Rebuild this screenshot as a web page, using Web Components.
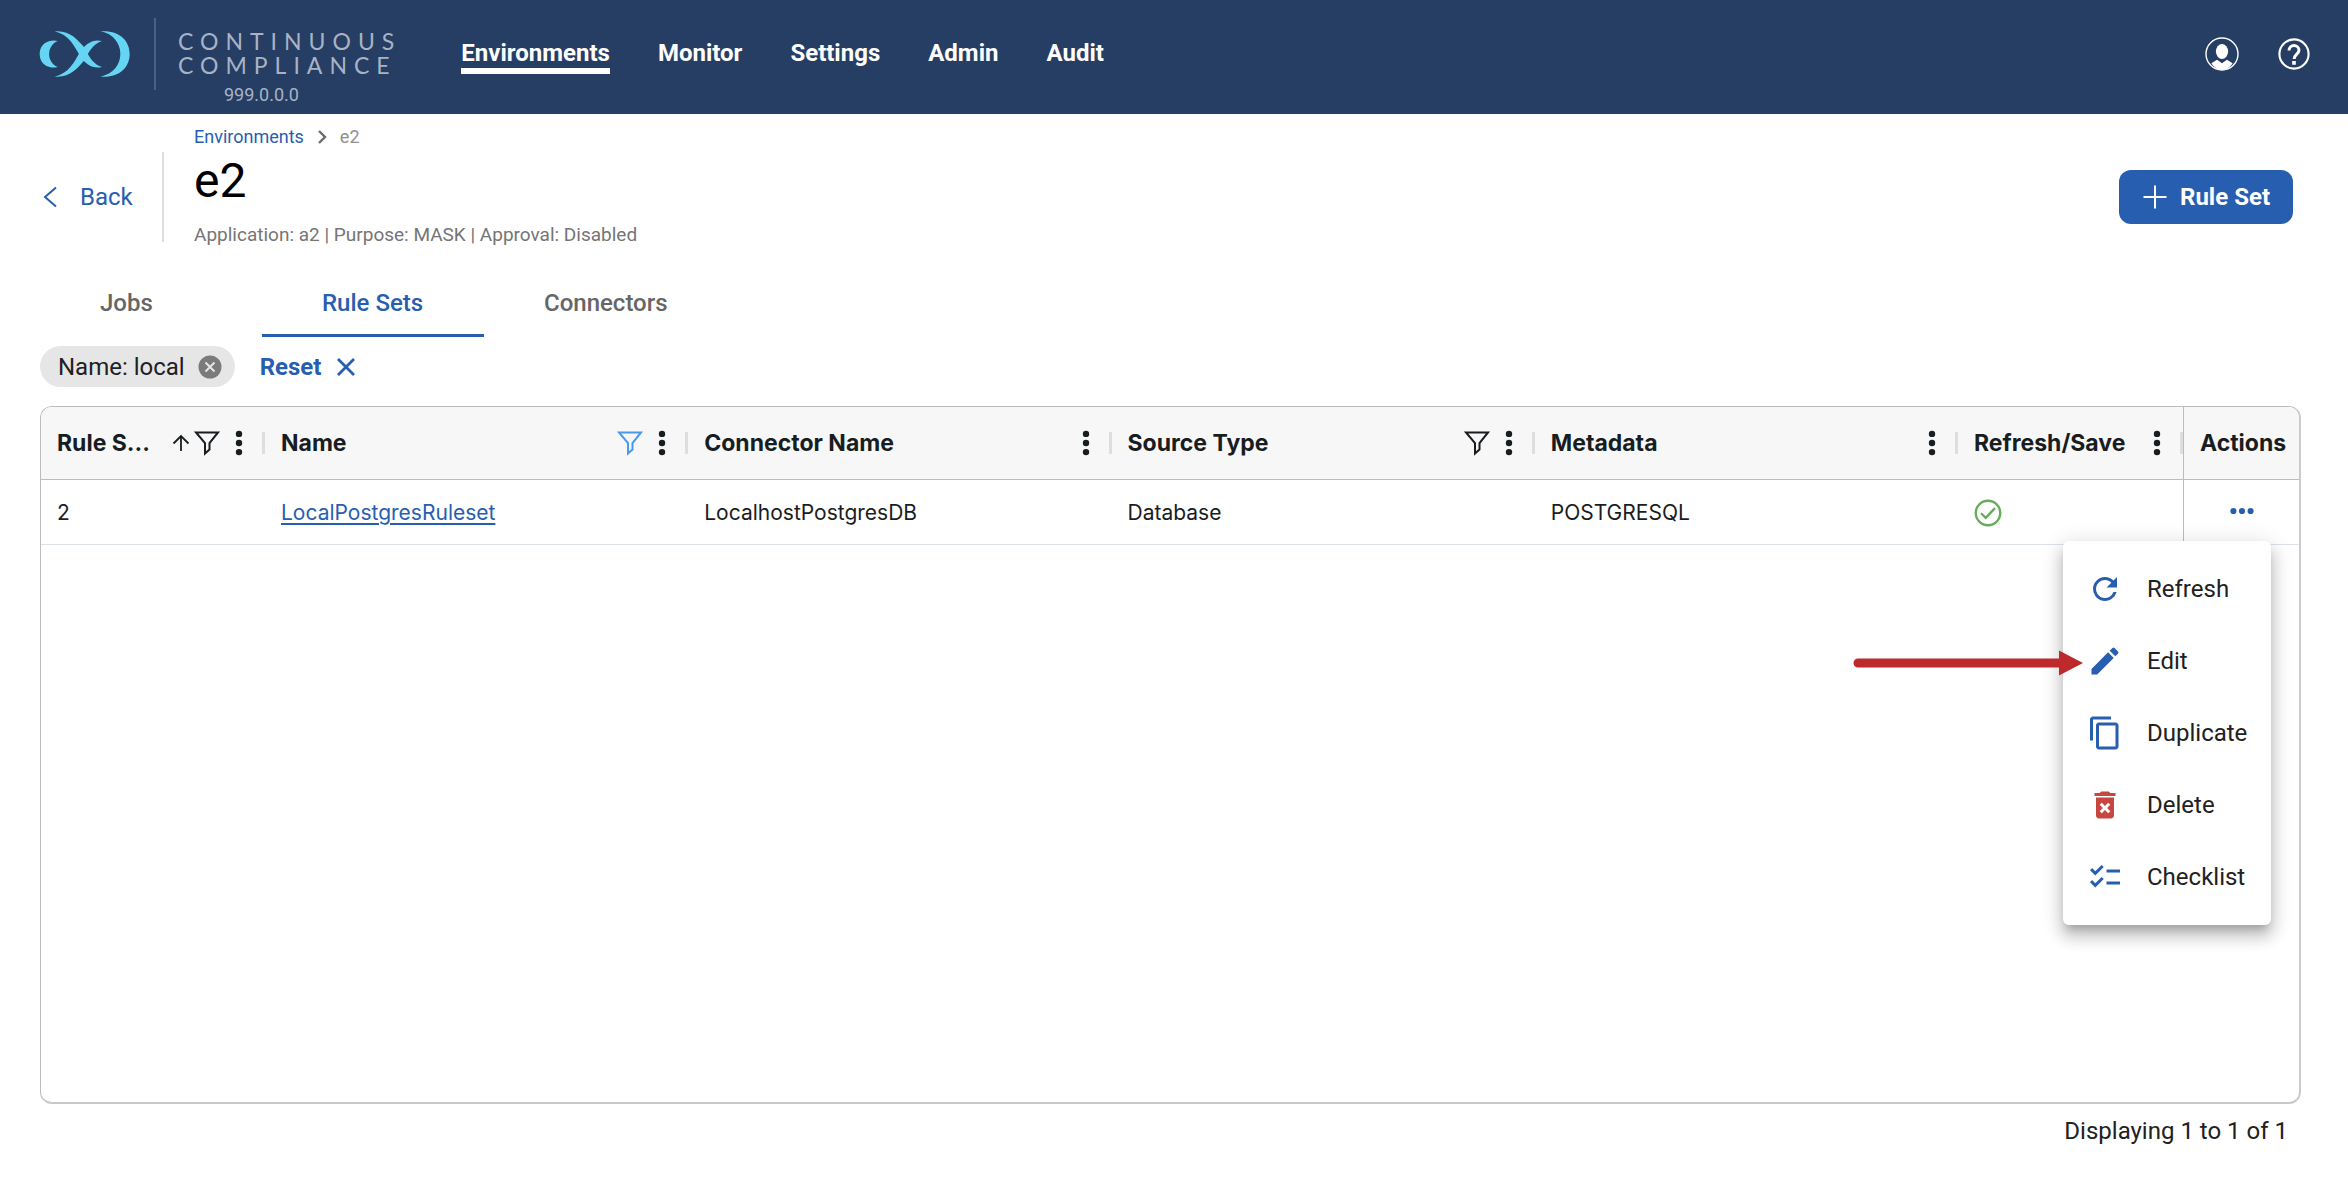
<!DOCTYPE html>
<html lang="en">
<head>
<meta charset="utf-8">
<title>Rule Sets</title>
<style>
  body {
    margin: 0;
    background: #fff;
    color: #212121;
    font-family: Roboto, sans-serif;
    font-size: 24px;
    line-height: 28px;
  }
</style>
</head>
<body>
<app-page>
  <top-bar slot="bar" version="999.0.0.0"></top-bar>
  <page-title name="e2">Application: a2 | Purpose: MASK | Approval: Disabled</page-title>
  <tab-strip></tab-strip>
  <filter-bar>Name: local</filter-bar>
  <ruleset-grid></ruleset-grid>
  <span slot="footer">Displaying 1 to 1 of 1</span>
</app-page>

<script>
const ICONS = {
  refresh: '<path d="M17.65 6.35A7.96 7.96 0 0 0 12 4a8 8 0 1 0 7.73 10h-2.08A6 6 0 1 1 12 6c1.66 0 3.14.69 4.22 1.78L13 11h7V4z"/>',
  edit: '<path d="M3 17.25V21h3.75L17.81 9.94l-3.75-3.75zM20.71 7.04a1 1 0 0 0 0-1.41l-2.34-2.34a1 1 0 0 0-1.41 0l-1.83 1.83 3.75 3.75z"/>',
  copy: '<path d="M16 1H4c-1.1 0-2 .9-2 2v14h2V3h12zm3 4H8c-1.1 0-2 .9-2 2v14c0 1.1.9 2 2 2h11c1.1 0 2-.9 2-2V7c0-1.1-.9-2-2-2m0 16H8V7h11z"/>',
  trash: '<path d="M6 19c0 1.1.9 2 2 2h8c1.1 0 2-.9 2-2V7H6zm2.46-7.12 1.41-1.41L12 12.59l2.12-2.12 1.41 1.41L13.41 14l2.12 2.12-1.41 1.41L12 15.41l-2.12 2.12-1.41-1.41L10.59 14zM15.5 4l-1-1h-5l-1 1H5v2h14V4z"/>',
  checklist: '<path d="M22 7h-9v2h9zm0 8h-9v2h9zM5.54 11 2 7.46l1.41-1.41 2.12 2.12 4.24-4.24 1.41 1.41zm0 8L2 15.46l1.41-1.41 2.12 2.12 4.24-4.24 1.41 1.41z"/>',
  cross: '<path d="M4 4 20 20M20 4 4 20" fill="none" stroke="currentColor" stroke-width="2.8"/>',
  clear: '<circle cx="12" cy="12" r="11.5"/><path d="M7.5 7.5l9 9M16.5 7.5l-9 9" stroke="#e6e6e6" stroke-width="2"/>',
  plus: '<path d="M12 .5v23M.5 12h23" fill="none" stroke="currentColor" stroke-width="2"/>',
  left: '<path d="M16 2.5 5 12l11 9.5" fill="none" stroke="currentColor" stroke-width="2"/>',
  right: '<path d="M9 6l6 6-6 6" fill="none" stroke="currentColor" stroke-width="2.4"/>',
  sort: '<path d="M12 20V5M4.5 12.5 12 5l7.5 7.5" fill="none" stroke="currentColor" stroke-width="1.8"/>',
  funnel: '<path d="M1 1.5h22L14.5 12v6.5L10 22.5V12z" fill="none" stroke="currentColor" stroke-width="2"/>',
  kebab: '<circle cx="12" cy="2.9" r="3.2"/><circle cx="12" cy="12" r="3.2"/><circle cx="12" cy="21.1" r="3.2"/>',
  more: '<circle cx="3.4" cy="12" r="3.1"/><circle cx="12" cy="12" r="3.1"/><circle cx="20.6" cy="12" r="3.1"/>',
  ok: '<circle cx="12" cy="12" r="10.5" fill="none" stroke="currentColor" stroke-width="2"/><path d="M6 12.2l4 4 8-8.4" fill="none" stroke="currentColor" stroke-width="2"/>',
  user: '<circle cx="12" cy="12" r="11.3" fill="none" stroke="currentColor" stroke-width="1"/><ellipse cx="12" cy="10.2" rx="4.3" ry="5.3"/><path d="M4.5 18.6 8.5 16.1 12 18.6l3.5-2.5 4 2.5c-1.8 2.900-4.500 4.700-7.500 4.700s-5.700-1.800-7.500-4.700z"/>',
  help: '<circle cx="12" cy="12" r="10.3" fill="none" stroke="currentColor" stroke-width="1.5"/><path d="M8.5 9.6c0-4.8 7-4.5 7-.3 0 2.7-3.4 2.9-3.4 6.2" fill="none" stroke="currentColor" stroke-width="2.1"/><path d="M10.7 17h2.6v2.5h-2.6z"/>'
};

function shadow(el, html) {
  const root = el.attachShadow({ mode: 'open' });
  root.innerHTML = html;
  return root;
}

class UiIcon extends HTMLElement {
  connectedCallback() {
    if (this.shadowRoot) return;
    const size = this.getAttribute('size') || 24;
    shadow(this, `
      <style>
        :host { display: inline-flex; flex: none; }
        svg { display: block; overflow: visible; fill: currentColor; }
      </style>
      <svg width="${size}" height="${size}" viewBox="0 0 24 24" aria-hidden="true">${ICONS[this.getAttribute('name')]}</svg>`);
  }
}
customElements.define('ui-icon', UiIcon);

class AppPage extends HTMLElement {
  constructor() {
    super();
    shadow(this, `
      <style>
        :host { display: flex; flex-direction: column; min-height: 100vh; }
        main { flex: 1; display: flex; flex-direction: column; padding: 11px 47px 0 40px; }
        footer { padding: 13px 60px 37px; text-align: right; }
      </style>
      <slot name="bar"></slot>
      <main><slot></slot></main>
      <footer><slot name="footer"></slot></footer>`);
  }
}
customElements.define('app-page', AppPage);

class TopBar extends HTMLElement {
  constructor() {
    super();
    const links = ['Environments', 'Monitor', 'Settings', 'Admin', 'Audit'];
    shadow(this, `
      <style>
        :host { display: block; background: #263e64; color: #fff; }
        header { display: flex; align-items: center; height: 108px; padding: 0 37px 6px 39px; }
        .rule { width: 2px; height: 72px; margin: 0 22px 0 23px; background: #4c6080; }
        .brand { padding-top: 28px; color: #a9b3c3; }
        .word { font: 400 23px/24px Lato, sans-serif; letter-spacing: 7px; }
        .version { margin-top: 6px; padding-left: 46px; font-size: 18px; line-height: 24px; }
        nav { display: flex; gap: 48px; margin-left: 60px; padding-top: 4px; flex: 1; }
        nav a { color: inherit; font-weight: 700; line-height: 30px; text-decoration: none; border-bottom: 6px solid transparent; }
        nav a[aria-current] { border-color: #fff; }
        button { display: flex; padding: 0; border: 0; background: none; color: inherit; }
        .tools { display: flex; gap: 38px; }
      </style>
      <header>
        <svg width="92" height="48" viewBox="28 60 276 144" fill="#65d5f3" role="img" aria-label="Logo">
          <path d="M84 93C66 87 30 95 30 132s36 45 54 39C50 156 50 108 84 93z"/>
          <path d="M75 64c45-4 67 23 92 52 12 28 28 49 50 55-27 7-51-9-66-33C132 105 118 75 75 64z"/>
          <path d="M75 200c45 4 67-23 92-52 12-28 28-49 50-55-27-7-51 9-66 33-19 33-33 63-76 74z"/>
          <path d="M212 64c58-4 88 28 88 68s-30 72-88 68c80-14 80-122 0-136z"/>
        </svg>
        <div class="rule"></div>
        <div class="brand">
          <div class="word">CONTINUOUS<br>COMPLIANCE</div>
          <div class="version"></div>
        </div>
        <nav>${links.map((l, i) => `<a href="#${l}"${i ? '' : ' aria-current="page"'}>${l}</a>`).join('')}</nav>
        <div class="tools">
          <button aria-label="Account"><ui-icon name="user" size="34"></ui-icon></button>
          <button aria-label="Help"><ui-icon name="help" size="34"></ui-icon></button>
        </div>
      </header>`);
  }

  connectedCallback() {
    this.shadowRoot.querySelector('.version').textContent = this.getAttribute('version');
  }
}
customElements.define('top-bar', TopBar);

class PageTitle extends HTMLElement {
  constructor() {
    super();
    shadow(this, `
      <style>
        :host { display: flex; align-items: center; height: 143px; }
        a { color: #275eb0; text-decoration: none; }
        .back { display: flex; align-items: center; gap: 16px; width: 122px; }
        .rule { width: 2px; height: 90px; background: #dedede; }
        .text { align-self: flex-start; flex: 1; padding-left: 30px; }
        .crumbs { display: flex; align-items: center; gap: 6px; font-size: 18px; line-height: 24px; color: #8e8e8e; }
        .crumbs ui-icon { color: #6b6b6b; }
        h1 { margin: 4px 0 14px; font-size: 48px; font-weight: 400; line-height: 56px; color: #000; }
        p { margin: 0; font-size: 19px; line-height: 24px; color: #757575; }
        button { display: flex; align-items: center; gap: 13px; height: 54px; padding: 0 23px 0 24px; margin-right: 8px;
          border: 0; border-radius: 12px; background: #275eb0; color: #fff; font: 700 24px/28px Roboto, sans-serif; }
      </style>
      <a class="back" href="#back"><ui-icon name="left" size="24"></ui-icon>Back</a>
      <div class="rule"></div>
      <div class="text">
        <nav class="crumbs"><a href="#environments">Environments</a><ui-icon name="right" size="24"></ui-icon><span class="name"></span></nav>
        <h1 class="name"></h1>
        <p><slot></slot></p>
      </div>
      <button><ui-icon name="plus" size="24"></ui-icon>Rule Set</button>`);
  }

  connectedCallback() {
    this.shadowRoot.querySelectorAll('.name').forEach(n => { n.textContent = this.getAttribute('name'); });
  }
}
customElements.define('page-title', PageTitle);

class TabStrip extends HTMLElement {
  constructor() {
    super();
    shadow(this, `
      <style>
        :host { display: flex; margin-top: 5px; }
        button { min-width: 222px; padding: 0 60px; border: 0; border-bottom: 3px solid transparent; background: none;
          color: #666; font: 500 24px/61px Roboto, sans-serif; text-align: left; }
        button[aria-selected="true"] { color: #275eb0; border-color: #275eb0; }
      </style>
      <button role="tab">Jobs</button>
      <button role="tab" aria-selected="true">Rule Sets</button>
      <button role="tab">Connectors</button>`);
  }

  connectedCallback() {
    this.setAttribute('role', 'tablist');
  }
}
customElements.define('tab-strip', TabStrip);

class FilterBar extends HTMLElement {
  constructor() {
    super();
    shadow(this, `
      <style>
        :host { display: flex; align-items: center; gap: 25px; margin: 9px 0 19px; }
        .chip { display: flex; align-items: center; gap: 13px; height: 41px; padding: 0 13px 0 18px; border-radius: 21px; background: #e6e6e6; }
        button { display: flex; align-items: center; gap: 13px; padding: 0; border: 0; background: none;
          color: #275eb0; font: 700 24px/28px Roboto, sans-serif; }
        .chip button { color: #7b7b7b; }
      </style>
      <div class="chip"><slot></slot><button aria-label="Remove filter"><ui-icon name="clear" size="24"></ui-icon></button></div>
      <button>Reset<ui-icon name="cross" size="24"></ui-icon></button>`);
  }
}
customElements.define('filter-bar', FilterBar);

// header cell: label, then sort / filter / menu buttons and the resize handle
class ColumnHead extends HTMLElement {
  connectedCallback() {
    if (this.shadowRoot) return;
    const filter = this.getAttribute('filter');
    shadow(this, `
      <style>
        :host { display: flex; align-items: center; height: 72px; padding-left: 16px; }
        .label { flex: 1; white-space: nowrap; }
        button { display: flex; padding: 0; border: 0; background: none; color: inherit; }
        .filter { margin-right: 8px; }
        .filter.on { color: #4a98f0; }
        .sort { margin-right: 2px; }
        .grip { width: 3px; height: 22px; margin-left: 11px; background: #dcdedf; }
      </style>
      <span class="label"><slot></slot></span>
      ${this.hasAttribute('sort') ? '<button class="sort" aria-label="Sort"><ui-icon name="sort" size="24"></ui-icon></button>' : ''}
      ${filter ? `<button class="filter ${filter}" aria-label="Filter"><ui-icon name="funnel" size="24"></ui-icon></button>` : ''}
      ${this.hasAttribute('plain') ? '' : '<button aria-label="Column menu"><ui-icon name="kebab" size="24"></ui-icon></button><span class="grip"></span>'}`);
  }
}
customElements.define('column-head', ColumnHead);

class ActionMenu extends HTMLElement {
  constructor() {
    super();
    const items = [['refresh', 'Refresh'], ['edit', 'Edit'], ['copy', 'Duplicate'], ['trash', 'Delete'], ['checklist', 'Checklist']];
    shadow(this, `
      <style>
        :host { display: block; box-sizing: border-box; width: 208px; padding: 12px 0; border-radius: 6px; background: #fff;
          box-shadow: 0 8px 8px -4px rgba(0,0,0,.2), 0 12px 15px 2px rgba(0,0,0,.14), 0 4px 21px 3px rgba(0,0,0,.12); }
        button { display: flex; align-items: center; gap: 24px; width: 100%; height: 72px; padding: 0 0 0 24px; border: 0;
          background: none; color: #212121; font: 400 24px/28px Roboto, sans-serif; }
        ui-icon { color: #275eb0; }
        ui-icon[name="trash"] { color: #c6473f; }
      </style>
      ${items.map(([icon, text]) => `<button role="menuitem"><ui-icon name="${icon}" size="36"></ui-icon>${text}</button>`).join('')}`);
  }

  connectedCallback() {
    this.setAttribute('role', 'menu');
  }
}
customElements.define('action-menu', ActionMenu);

class RulesetGrid extends HTMLElement {
  constructor() {
    super();
    shadow(this, `
      <style>
        :host { display: block; flex: 1; border: 1px solid #bdbdbd; border-right: 2px solid #cbcbcb; border-bottom: 2px solid #c6c8cb; border-radius: 12px; }
        table { width: 100%; table-layout: fixed; border-collapse: separate; border-spacing: 0; font-family: Inter, sans-serif; color: #181d1f; }
        th { padding: 0; background: #f7f7f7; border-bottom: 1px solid #bcbcbc; font-size: 23px; font-weight: 700; text-align: left; }
        th:first-child { border-top-left-radius: 11px; }
        th:last-child { border-top-right-radius: 11px; }
        td { height: 65px; box-sizing: border-box; padding: 2px 16px 0; border-bottom: 1px solid #dde1ea; font-size: 21px; }
        th:last-child, td:last-child { border-left: 1px solid #bcbcbc; }
        .id { width: 224px; }
        .save { width: 225px; }
        .act { width: 116px; }
        a { color: #275eb0; text-decoration-thickness: 2px; text-underline-offset: 3px; }
        .ok { display: flex; color: #66ad5b; }
        td:last-child { position: relative; padding: 0 16px 2px; }
        .more { display: flex; margin: auto; padding: 0; border: 0; background: none; color: #275eb0; }
        action-menu { position: absolute; top: 61px; right: 28px; z-index: 1; }
        .pointer { position: absolute; top: 170px; right: 216px; z-index: 2; }
      </style>
      <table>
        <colgroup><col class="id"><col><col><col><col><col class="save"><col class="act"></colgroup>
        <thead><tr>
          <th><column-head sort filter="off">Rule S...</column-head></th>
          <th><column-head filter="on">Name</column-head></th>
          <th><column-head>Connector Name</column-head></th>
          <th><column-head filter="off">Source Type</column-head></th>
          <th><column-head>Metadata</column-head></th>
          <th><column-head>Refresh/Save</column-head></th>
          <th><column-head plain>Actions</column-head></th>
        </tr></thead>
        <tbody><tr>
          <td>2</td>
          <td><a href="#ruleset">LocalPostgresRuleset</a></td>
          <td>LocalhostPostgresDB</td>
          <td>Database</td>
          <td>POSTGRESQL</td>
          <td><span class="ok"><ui-icon name="ok" size="28"></ui-icon></span></td>
          <td>
            <button class="more" aria-label="Row actions"><ui-icon name="more" size="24"></ui-icon></button>
            <action-menu></action-menu>
            <svg class="pointer" width="230" height="26" viewBox="0 0 230 26" fill="#be2a2b" aria-hidden="true">
              <path d="M5 8.5h201V.5L230 13 206 25.5V17.5H5a4.5 4.5 0 0 1 0-9z"/>
            </svg>
          </td>
        </tr></tbody>
      </table>`);
  }
}
customElements.define('ruleset-grid', RulesetGrid);
</script>
</body>
</html>
